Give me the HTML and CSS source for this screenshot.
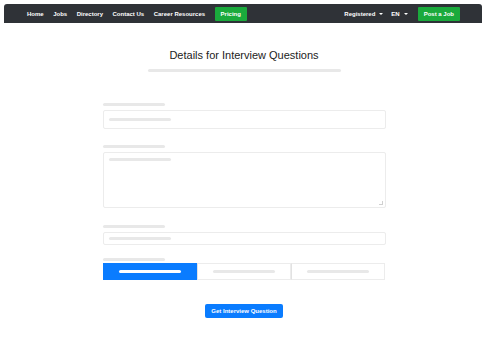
FILE: index.html
```html
<!DOCTYPE html>
<html lang="en">
<head>
    <meta charset="UTF-8">
    <meta name="viewport" content="width=device-width, initial-scale=1.0">
    <title>Details for Interview Questions</title>
    <link rel="stylesheet" href="styles.css">
</head>
<body>
    <nav class="topbar">
        <div class="nav-left">
            <a href="#">Home</a>
            <a href="#">Jobs</a>
            <a href="#">Directory</a>
            <a href="#">Contact Us</a>
            <a href="#">Career Resources</a>
            <a href="#" class="btn-green">Pricing</a>
        </div>
        <div class="nav-right">
            <a href="#" class="drop">Registered<span class="caret"></span></a>
            <a href="#" class="drop">EN<span class="caret"></span></a>
            <a href="#" class="btn-green">Post a Job</a>
        </div>
    </nav>

    <main class="content">
        <h1 class="title">Details for Interview Questions</h1>
        <div class="title-bar"></div>

        <form class="form">
            <div class="field">
                <div class="label-bar"></div>
                <div class="input"><div class="ph-bar"></div></div>
            </div>
            <div class="field field-area">
                <div class="label-bar"></div>
                <div class="input textarea"><div class="ph-bar"></div><span class="grip"></span></div>
            </div>
            <div class="field field-small">
                <div class="label-bar"></div>
                <div class="input small"><div class="ph-bar"></div></div>
            </div>
            <div class="field field-choice">
                <div class="label-bar"></div>
                <div class="segments">
                    <div class="segment active"><div class="seg-bar"></div></div>
                    <div class="segment"><div class="seg-bar"></div></div>
                    <div class="segment"><div class="seg-bar"></div></div>
                </div>
            </div>
            <div class="actions">
                <button type="button" class="btn-blue">Get Interview Question</button>
            </div>
        </form>
    </main>
</body>
</html>
```

FILE: styles.css
```css
:root {
    --nav-bg: #2f3237;
    --green: #1aaa3c;
    --blue: #0a7cff;
    --skeleton: #e8e8e8;
    --border: #ececec;
}

body {
    margin: 0;
    padding: 4px 5px 0 4px;
    font-family: "Liberation Sans", Arial, sans-serif;
    background-color: #ffffff;
    color: #222;
}
a {
    color: #fff;
    text-decoration: none;
}

.topbar {
    display: flex;
    justify-content: space-between;
    align-items: center;
    height: 19px;
    padding: 0 22px 0 23px;
    background-color: var(--nav-bg);
    border-radius: 3px 3px 0 0;
}
.nav-left, .nav-right {
    display: flex;
    align-items: center;
    font-size: 6px;
    font-weight: bold;
}
.nav-left a {
    margin-right: 9.5px;
}
.nav-right a {
    margin-left: 8px;
}
.nav-right .btn-green {
    margin-left: 10px;
}
.btn-green {
    background-color: var(--green);
    padding: 4px 6px;
    line-height: 6px;
    border-radius: 1px;
}
.caret {
    display: inline-block;
    margin-left: 4px;
    border-left: 2px solid transparent;
    border-right: 2px solid transparent;
    border-top: 2px solid #fff;
    vertical-align: middle;
}

.content {
    width: 283px;
    margin: 0 auto;
    padding-left: 2px;
}
.title {
    margin: 26px 0 0;
    font-size: 11px;
    font-weight: normal;
    text-align: center;
    color: #222;
}
.title-bar {
    width: 193px;
    height: 3px;
    margin: 8px auto 0;
    background-color: var(--skeleton);
    border-radius: 2px;
}

.form {
    margin-top: 31px;
}
.field {
    margin-bottom: 16px;
}
.field-area {
    margin-bottom: 17px;
}
.field-small {
    margin-bottom: 13px;
}
.label-bar {
    width: 62px;
    height: 3px;
    margin-bottom: 4px;
    background-color: var(--skeleton);
    border-radius: 2px;
}
.field-choice .label-bar {
    margin-bottom: 2px;
}
.input {
    position: relative;
    box-sizing: border-box;
    height: 19px;
    padding: 7px 5px 0;
    border: 1px solid var(--border);
    border-radius: 2px;
}
.input.textarea {
    height: 56px;
    padding-top: 5px;
}
.input.small {
    height: 13px;
    padding-top: 4px;
}
.ph-bar {
    width: 62px;
    height: 3px;
    background-color: var(--skeleton);
    border-radius: 2px;
}
.grip {
    position: absolute;
    right: 2px;
    bottom: 2px;
    width: 3px;
    height: 3px;
    border-right: 1px solid #d0d0d0;
    border-bottom: 1px solid #d0d0d0;
}

.segments {
    display: flex;
    height: 17px;
}
.segment {
    flex: 1;
    display: flex;
    align-items: center;
    justify-content: center;
    border: 1px solid var(--border);
}
.segment + .segment {
    border-left: 1px solid #e2e2e2;
}
.seg-bar {
    width: 62px;
    height: 3px;
    background-color: var(--skeleton);
    border-radius: 2px;
}
.segment.active {
    background-color: var(--blue);
    border-color: var(--blue);
}
.segment.active .seg-bar {
    background-color: #fff;
}

.actions {
    display: flex;
    justify-content: center;
    margin-top: 24px;
}
.btn-blue {
    padding: 4px 6px;
    font-family: "Liberation Sans", Arial, sans-serif;
    font-size: 6px;
    line-height: 6px;
    font-weight: bold;
    color: #fff;
    background-color: var(--blue);
    border: none;
    border-radius: 2px;
}
```
